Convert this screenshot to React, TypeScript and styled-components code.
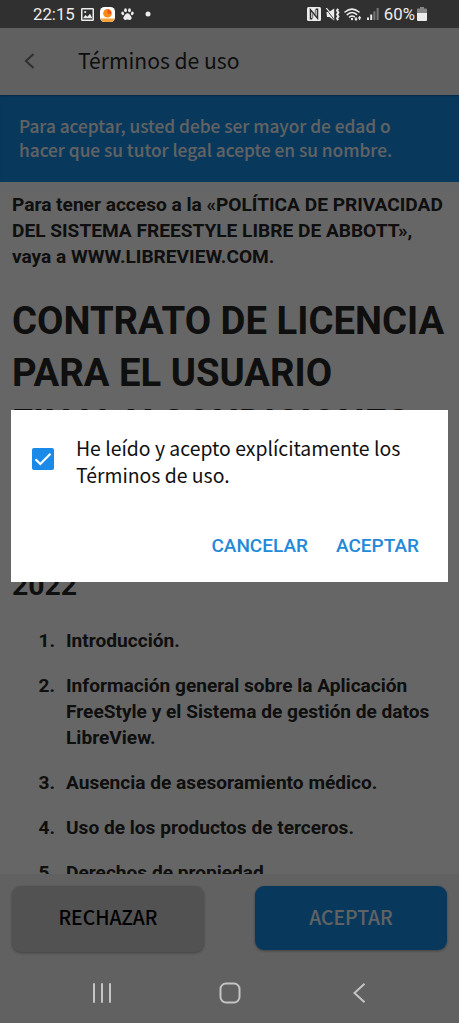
import React from "react";
import styled, { createGlobalStyle } from "styled-components";

const GlobalStyle = createGlobalStyle`
  * { box-sizing: border-box; }
  html, body { margin: 0; padding: 0; background: #303030; }
  h1, h2, p, ol { margin: 0; padding: 0; }
  button { border: 0; background: none; padding: 0; margin: 0; font: inherit; }
`;

const sourceFont = `"Noto Sans CJK SC", "Noto Sans", sans-serif`;
const robotoFont = `Roboto, "Liberation Sans", sans-serif`;

const Screen = styled.div`
  width: 459px;
  height: 1023px;
  display: flex;
  flex-direction: column;
  overflow: hidden;
  font-family: ${robotoFont};
`;

const StatusBar = styled.header`
  height: 28px;
  flex: none;
  display: flex;
  align-items: center;
  justify-content: space-between;
  padding: 0 32px 0 33px;
  background: #303030;
  color: #ececec;
`;

const StatusGroup = styled.div<{ $gap: number }>`
  display: flex;
  align-items: center;
  gap: ${(p) => p.$gap}px;
  height: 28px;
  svg { display: block; flex: none; }
`;

const StatusText = styled.span<{ $endGap?: number }>`
  font-size: 16.8px;
  line-height: 28px;
  margin-right: ${(p) => p.$endGap ?? 0}px;
`;

const AppArea = styled.div`
  position: relative;
  flex: 1;
  min-height: 0;
  display: flex;
  flex-direction: column;
  background: #fff;
`;

const TitleBar = styled.div`
  height: 67px;
  flex: none;
  display: flex;
  align-items: center;
  padding: 0 0 2px 23px;
  background: #f1f1f1;
`;

const Title = styled.span`
  margin-left: 42px;
  padding-bottom: 2px;
  font-family: ${sourceFont};
  font-size: 21.1px;
  line-height: 30px;
  color: #262626;
`;

const Banner = styled.div`
  height: 87px;
  flex: none;
  padding: 19px 19px 0;
  background: #148ee9;
  box-shadow: inset 0 2px 2px -1px rgba(0, 0, 0, 0.3);
  color: #f6f6f6;
  font-family: ${sourceFont};
  font-weight: 500;
  font-size: 17.25px;
  line-height: 24px;
  white-space: nowrap;
`;

const Document = styled.main`
  flex: 1;
  min-height: 0;
  overflow: hidden;
  border-top: 10px solid #fafcfe;
  padding: 0 12px;
  background: #fff;
  color: #262626;
  font-size: 19.12px;
  line-height: 26px;
  font-weight: 700;
`;

const Paragraph = styled.p`
  white-space: nowrap;
`;

const Heading = styled.h1`
  margin-top: 25.25px;
  font-size: 38.27px;
  line-height: 51.5px;
  white-space: nowrap;
`;

const SubHeading = styled.h2`
  margin: 25.75px 0 23px;
  font-size: 28.4px;
  line-height: 39px;
`;

const Contents = styled.ol`
  display: flex;
  flex-direction: column;
  gap: 19px;
  list-style: none;
`;

const ContentsItem = styled.li`
  display: flex;
  white-space: nowrap;
`;

const ItemNumber = styled.span`
  width: 43px;
  margin-right: 11px;
  text-align: right;
`;

const ActionBar = styled.div`
  height: 90px;
  flex: none;
  display: flex;
  justify-content: space-between;
  padding: 12px 12px 0;
  background: #f3f3f3;
`;

const ActionButton = styled.button<{ $primary?: boolean }>`
  width: 192px;
  height: ${(p) => (p.$primary ? 64 : 66)}px;
  padding-bottom: ${(p) => (p.$primary ? 2 : 4)}px;
  border-radius: 9px;
  background: ${(p) => (p.$primary ? "#148ee9" : "#cdcdcd")};
  color: ${(p) => (p.$primary ? "#f6f6f6" : "#000")};
  box-shadow: 0 1px 3px rgba(0, 0, 0, 0.35);
  font-family: ${sourceFont};
  font-weight: 500;
  font-size: 19.3px;
`;

const Backdrop = styled.div`
  position: absolute;
  inset: 0;
  background: rgba(0, 0, 0, 0.6);
`;

const Dialog = styled.section`
  position: absolute;
  left: 11px;
  top: 382px;
  width: 437px;
  height: 172px;
  display: flex;
  flex-direction: column;
  justify-content: space-between;
  padding: 24px 29px 22px 21px;
  background: #fff;
`;

const ConsentRow = styled.label`
  display: flex;
  align-items: flex-start;
`;

const Checkbox = styled.span`
  width: 22px;
  height: 22px;
  margin: 14px 22px 0 0;
  flex: none;
  border-radius: 2px;
  background: #1a8ae8;
  svg { display: block; }
`;

const ConsentText = styled.span`
  font-family: ${sourceFont};
  font-size: 19.4px;
  line-height: 27px;
  color: #111;
  white-space: nowrap;
`;

const DialogActions = styled.div`
  display: flex;
  justify-content: flex-end;
  gap: 28px;
`;

const TextButton = styled.button`
  color: #2389d8;
  font-weight: 500;
  font-size: 19px;
  line-height: 28px;
`;

const NavBar = styled.nav`
  height: 59px;
  flex: none;
  display: flex;
  align-items: center;
  padding: 0 0 1px 92px;
  background: #616161;
  svg { display: block; }
  svg + svg { margin-left: 107px; }
  svg:last-child { margin-left: 111px; }
`;

const items: string[][] = [
  ["Introducción."],
  ["Información general sobre la Aplicación", "FreeStyle y el Sistema de gestión de datos", "LibreView."],
  ["Ausencia de asesoramiento médico."],
  ["Uso de los productos de terceros."],
  ["Derechos de propiedad."],
];

const Lines = ({ lines }: { lines: string[] }) => (
  <>
    {lines.map((line, i) => (
      <React.Fragment key={line}>
        {i > 0 && <br />}
        {line}
      </React.Fragment>
    ))}
  </>
);

const PictureIcon = () => (
  <svg width="13" height="13" viewBox="0 0 13 13">
    <rect x="0.75" y="0.75" width="11.5" height="11.5" rx="0.6" fill="none" stroke="#ececec" strokeWidth="1.5" />
    <path d="M2 10.200 4.400 7l2 1.800L9 5.800l2.300 4.400Z" fill="#ececec" />
    <circle cx="4.200" cy="4" r="1.100" fill="#ececec" />
  </svg>
);

const AppBadgeIcon = () => (
  <svg width="15" height="15" viewBox="0 0 15 15">
    <rect width="15" height="15" rx="4.5" fill="#fff" />
    <path d="M.4 11.500h14.200Q13.600 15 10.500 15h-6Q1.400 15 .4 11.500Z" fill="#f6a33c" />
    <circle cx="7.500" cy="6.300" r="4.300" fill="#fb8a13" />
    <path d="M7.500 2.500a3.500 3.500 0 0 1 3.500 4.500L7.500 6.500Z" fill="#f4511e" />
  </svg>
);

const PawIcon = () => (
  <svg width="13" height="12" viewBox="0 0 13 12" fill="#ececec">
    <ellipse cx="1.700" cy="5.400" rx="1.350" ry="1.800" transform="rotate(-20 1.700 5.400)" />
    <ellipse cx="4.500" cy="2.200" rx="1.400" ry="2" />
    <ellipse cx="8.500" cy="2.200" rx="1.400" ry="2" />
    <ellipse cx="11.300" cy="5.400" rx="1.350" ry="1.800" transform="rotate(20 11.300 5.400)" />
    <path d="M6.500 5.300c1.800 0 2.300 1.700 3.300 2.700 1.600 1.600.7 3.900-1 3.900-.9 0-1.400-.5-2.300-.5s-1.400.5-2.300.5c-1.700 0-2.600-2.300-1-3.900 1-1 1.500-2.700 3.300-2.700Z" />
  </svg>
);

const DotIcon = () => (
  <svg width="11" height="6" viewBox="0 0 11 6">
    <circle cx="8" cy="3" r="2.500" fill="#ececec" />
  </svg>
);

const NfcIcon = () => (
  <svg width="14" height="14" viewBox="0 0 14 14">
    <rect width="14" height="14" rx="1.500" fill="#ececec" />
    <path d="M5.200 11.700H3.500V2.800L10.500 11.200V2.300H8.800" fill="none" stroke="#303030" strokeWidth="1.500" />
    <path d="M5.700 6.500V11.500M8.300 2.500V7.500" stroke="#303030" strokeWidth="0.700" />
  </svg>
);

const MuteVibrateIcon = () => (
  <svg width="14" height="13" viewBox="0 0 14 13">
    <path d="M.5 4h2.500L8.200.500v12L3.500 9H1Z" fill="#ececec" />
    <path d="M.3 1.200 8 11.500" stroke="#303030" strokeWidth="0.900" />
    <path d="M.3 0 4 4.600" stroke="#ececec" strokeWidth="1.100" />
    <path d="M12 .8l-.9 1.900 1.300 1.900-1.300 1.900 1.300 1.900-1.300 1.900.9 1.900" fill="none" stroke="#ececec" strokeWidth="2" />
  </svg>
);

const WifiIcon = () => (
  <svg width="18" height="13" viewBox="0 0 18 13">
    <g fill="none" stroke="#ececec" strokeWidth="1.500" strokeLinecap="round">
      <path d="M1 4Q8-1.800 15 4" />
      <path d="M3.200 6.600Q8 2.600 12.600 6.400" />
      <path d="M5.500 9Q8 7 10.300 8.700" />
    </g>
    <circle cx="8" cy="11" r="1.200" fill="#ececec" />
    <path d="M12 9v3M10.800 10.600 12 12.200l1.200-1.600M15.600 12V8.800M14.400 10.300l1.200-1.600 1.200 1.600" fill="none" stroke="#ececec" strokeWidth="1.100" />
  </svg>
);

const SignalIcon = () => (
  <svg width="12" height="12" viewBox="0 0 12 12">
    <rect x="0" y="9.500" width="2" height="2.500" fill="#ececec" />
    <rect x="3.200" y="6.500" width="2" height="5.500" fill="#ececec" />
    <rect x="6.400" y="3.300" width="2" height="8.700" fill="#777" />
    <rect x="9.600" y="0" width="2" height="12" fill="#777" />
  </svg>
);

const BatteryIcon = () => (
  <svg width="10" height="14" viewBox="0 0 10 14">
    <path d="M3 0h4v1.500h2q1 0 1 1V6H0V2.500q0-1 1-1h2Z" fill="#858585" />
    <path d="M0 6h10v7q0 1-1 1H1q-1 0-1-1Z" fill="#ececec" />
  </svg>
);

export default function App() {
  return (
    <>
      <GlobalStyle />
      <Screen>
        <StatusBar>
          <StatusGroup $gap={6}>
            <StatusText>22:15</StatusText>
            <PictureIcon />
            <AppBadgeIcon />
            <PawIcon />
            <DotIcon />
          </StatusGroup>
          <StatusGroup $gap={4.7}>
            <NfcIcon />
            <MuteVibrateIcon />
            <WifiIcon />
            <SignalIcon />
            <StatusText $endGap={-2.7}>60%</StatusText>
            <BatteryIcon />
          </StatusGroup>
        </StatusBar>

        <AppArea>
          <TitleBar>
            <svg width="13" height="18" viewBox="0 0 13 18">
              <path d="M10.500 2 3 9l7.500 7" fill="none" stroke="#7a7a7a" strokeWidth="2.200" />
            </svg>
            <Title>Términos de uso</Title>
          </TitleBar>
          <Banner>
            <Lines lines={["Para aceptar, usted debe ser mayor de edad o", "hacer que su tutor legal acepte en su nombre."]} />
          </Banner>
          <Document>
            <Paragraph>
              <Lines
                lines={[
                  "Para tener acceso a la «POLÍTICA DE PRIVACIDAD",
                  "DEL SISTEMA FREESTYLE LIBRE DE ABBOTT»,",
                  "vaya a WWW.LIBREVIEW.COM.",
                ]}
              />
            </Paragraph>
            <Heading>
              <Lines lines={["CONTRATO DE LICENCIA", "PARA EL USUARIO", "FINAL Y CONDICIONES", "DE USO"]} />
            </Heading>
            <SubHeading>
              <Lines lines={["Abril de", "2022"]} />
            </SubHeading>
            <Contents>
              {items.map((lines, i) => (
                <ContentsItem key={i}>
                  <ItemNumber>{i + 1}.</ItemNumber>
                  <span>
                    <Lines lines={lines} />
                  </span>
                </ContentsItem>
              ))}
            </Contents>
          </Document>
          <ActionBar>
            <ActionButton>RECHAZAR</ActionButton>
            <ActionButton $primary>ACEPTAR</ActionButton>
          </ActionBar>

          <Backdrop />
          <Dialog role="dialog">
            <ConsentRow>
              <Checkbox>
                <svg width="22" height="22" viewBox="0 0 22 22">
                  <path d="M3.500 11.200 8.300 16 18.500 5.700" fill="none" stroke="#fff" strokeWidth="2.200" />
                </svg>
              </Checkbox>
              <ConsentText>
                <Lines lines={["He leído y acepto explícitamente los", "Términos de uso."]} />
              </ConsentText>
            </ConsentRow>
            <DialogActions>
              <TextButton>CANCELAR</TextButton>
              <TextButton>ACEPTAR</TextButton>
            </DialogActions>
          </Dialog>
        </AppArea>

        <NavBar>
          <svg width="20" height="22" viewBox="0 0 20 22">
            <path d="M2 2v18M10 2v18M18 2v18" stroke="#c4c4c4" strokeWidth="2" strokeLinecap="round" />
          </svg>
          <svg width="22" height="22" viewBox="0 0 22 22">
            <rect x="1.500" y="1.500" width="19" height="19" rx="5.500" fill="none" stroke="#c4c4c4" strokeWidth="2" />
          </svg>
          <svg width="14" height="22" viewBox="0 0 14 22">
            <path d="M12.500 1.800 2.500 11l10 9.200" fill="none" stroke="#c4c4c4" strokeWidth="2" />
          </svg>
        </NavBar>
      </Screen>
    </>
  );
}
